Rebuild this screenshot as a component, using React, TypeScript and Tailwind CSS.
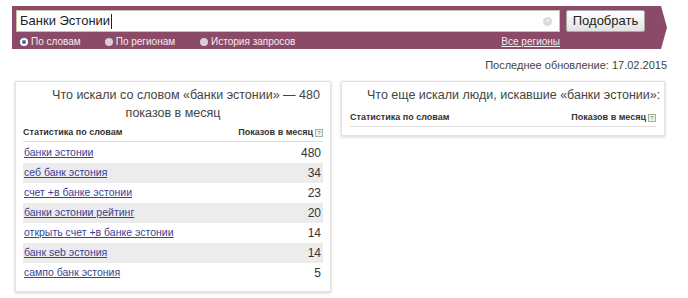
const rows = [
  { q: "банки эстонии", n: 480 },
  { q: "себ банк эстония", n: 34 },
  { q: "счет +в банке эстонии", n: 23 },
  { q: "банки эстонии рейтинг", n: 20 },
  { q: "открыть счет +в банке эстонии", n: 14 },
  { q: "банк seb эстония", n: 14 },
  { q: "сампо банк эстония", n: 5 },
];

function Help() {
  return (
    <span className="ml-[2px] inline-flex h-[8px] w-[8px] items-center justify-center border border-[#9fb59a] bg-[#eef3ec] text-[6px] leading-none font-normal text-[#6f8f68]">
      ?
    </span>
  );
}

function Radio({ on, label }: { on?: boolean; label: string }) {
  return (
    <span className="flex items-center gap-[3px]">
      <span
        className={
          on
            ? "flex h-[8px] w-[8px] items-center justify-center rounded-full bg-white"
            : "h-[8px] w-[8px] rounded-full bg-[#d8d0d4]"
        }
      >
        {on && <span className="h-[4px] w-[4px] rounded-full bg-[#2f6fa8]" />}
      </span>
      <span>{label}</span>
    </span>
  );
}

function TableHead() {
  return (
    <div className="flex items-center justify-between border-b border-[#dedede] pb-[1px] text-[9px] font-bold text-[#333]">
      <span>Статистика по словам</span>
      <span className="flex items-center">
        Показов в месяц
        <Help />
      </span>
    </div>
  );
}

export default function App() {
  return (
    <div className="h-[298px] w-[688px] overflow-hidden bg-white font-['Liberation_Sans',Arial,sans-serif]">
      <div className="ml-[12px] mt-[6px] h-[43px] w-[655px] bg-[#8b4b68] pl-[4px] pt-[4px] [clip-path:polygon(0_0,649px_0,655px_50%,649px_100%,0_100%)]">
        <div className="flex items-center gap-[6px]">
          <div className="flex h-[22px] w-[544px] items-center justify-between border border-[#cdbfa8] bg-white pl-[3px] pr-[7px] text-[13px] text-[#222]">
            <span>
              Банки Эстонии<span className="ml-[1px] inline-block h-[15px] w-[1px] bg-[#222] align-middle" />
            </span>
            <span className="flex h-[9px] w-[9px] items-center justify-center rounded-full bg-[#d9d9d9] text-[8px] leading-none text-white">
              ×
            </span>
          </div>
          <button className="h-[22px] w-[79px] rounded-[2px] border border-[#a9a9a9] bg-gradient-to-b from-white to-[#e2e2e2] text-[13px] text-[#222]">
            Подобрать
          </button>
        </div>
        <div className="mt-[4px] flex w-[544px] items-center text-[10px] leading-[12px] text-[#f4ecf0]">
          <span className="ml-[4px]">
            <Radio on label="По словам" />
          </span>
          <span className="ml-[24px]">
            <Radio label="По регионам" />
          </span>
          <span className="ml-[25px]">
            <Radio label="История запросов" />
          </span>
          <span className="ml-auto underline">Все регионы</span>
        </div>
      </div>

      <div className="mt-[9px] pr-[21px] text-right text-[11px] leading-[14px] text-[#444]">
        Последнее обновление: 17.02.2015
      </div>

      <div className="mt-[9px] flex items-start gap-[10px] pl-[15px]">
        <div className="w-[316px] border border-[#e2e2e2] px-[7px] pb-[8px] shadow-[0_1px_3px_rgba(0,0,0,0.18)]">
          <div className="whitespace-nowrap pt-[4px] text-center text-[12.5px] leading-[18px] text-[#444]">
            <div className="pl-[26px]">Что искали со словом «банки эстонии» — 480</div>
            <div>показов в месяц</div>
          </div>
          <div className="mt-[4px]">
            <TableHead />
          </div>
          <div className="mt-[1px]">
            {rows.map((r, i) => (
              <div
                key={r.q}
                className={
                  "flex h-[20px] items-center justify-between pl-[1px] pr-[2px] " +
                  (i % 2 === 1 ? "bg-[#ececec]" : "")
                }
              >
                <span className="text-[10.5px] text-[#3b3f95] underline">{r.q}</span>
                <span className="text-[12px] text-[#333]">{r.n}</span>
              </div>
            ))}
          </div>
        </div>

        <div className="w-[324px] overflow-hidden border border-[#e2e2e2] px-[8px] pb-[8px] shadow-[0_1px_3px_rgba(0,0,0,0.18)]">
          <div className="whitespace-nowrap pl-[17px] pt-[4px] text-[12.5px] leading-[18px] text-[#444]">
            Что еще искали люди, искавшие «банки эстонии»:
          </div>
          <div className="mt-[7px]">
            <TableHead />
          </div>
        </div>
      </div>
    </div>
  );
}
